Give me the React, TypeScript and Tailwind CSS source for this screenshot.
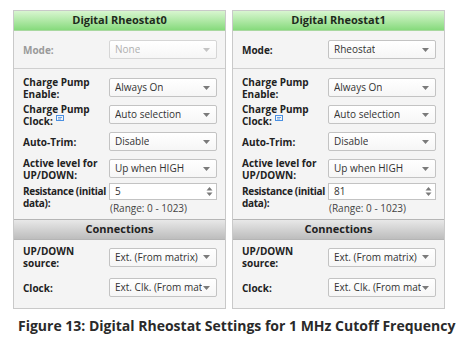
import React from 'react';

type Row = {
    label: string[];
    value: string;
    help?: boolean;
};

const font = { fontFamily: '"Open Sans", "Noto Sans", sans-serif' };

const Arrow = ({ dim }: { dim?: boolean }) => (
    <svg width="7" height="4" viewBox="0 0 7 4" className="shrink-0">
        <path d="M0 0 L7 0 L3.5 4 Z" fill={dim ? '#c4c4c4' : '#7a7a7a'} />
    </svg>
);

const HelpIcon = () => (
    <svg width="8" height="6" viewBox="0 0 8 6" className="inline-block ml-[3px] relative -top-[4px]">
        <rect x="0.5" y="0.5" width="7" height="5" fill="none" stroke="#4a90e2" strokeWidth="1" />
        <path d="M2 2.5 H6 M2 4 H5" stroke="#4a90e2" strokeWidth="0.8" />
    </svg>
);

const Select = ({ value, dim }: { value: string; dim?: boolean }) => (
    <div
        className={`w-[108px] h-[19px] shrink-0 flex items-center justify-between pl-[5px] pr-[6px] rounded-[2px] border bg-gradient-to-b from-white to-[#f6f6f6] text-[10px] whitespace-nowrap overflow-hidden ${
            dim ? 'text-[#b0b0b0] border-[#d6d6d6]' : 'text-[#333] border-[#c3c3c3]'
        }`}
    >
        <span className="overflow-hidden">{value}</span>
        <Arrow dim={dim} />
    </div>
);

const Label = ({ lines, dim, help, tight }: { lines: string[]; dim?: boolean; help?: boolean; tight?: boolean }) => (
    <div
        className={`w-[86px] shrink-0 text-[10px] leading-[12px] font-bold ${
            dim ? 'text-[#9a9a9a]' : 'text-[#222]'
        } ${tight ? 'tracking-[-0.3px]' : ''}`}
    >
        {lines.map((l, i) => (
            <div key={i} className="whitespace-nowrap">
                {l}
                {help && i === lines.length - 1 && <HelpIcon />}
            </div>
        ))}
    </div>
);

const Panel = ({ name, mode, resistance }: { name: string; mode: string; resistance: string }) => {
    const rows: Row[] = [
        { label: ['Charge Pump', 'Enable:'], value: 'Always On' },
        { label: ['Charge Pump', 'Clock:'], value: 'Auto selection', help: true },
        { label: ['Auto-Trim:'], value: 'Disable' },
        { label: ['Active level for', 'UP/DOWN:'], value: 'Up when HIGH' },
    ];
    const dim = mode === 'None';

    return (
        <div className="w-[213px] border border-[#c9c9c9] bg-[#f4f4f4]">
            <div className="h-[20px] flex items-center justify-center border-b border-[#a9d8a0] bg-gradient-to-b from-[#d8f6d0] to-[#86da7c] text-[11px] font-bold text-[#1e2a1c]">
                {name}
            </div>

            <div className="flex items-center pl-[9px] pt-[9px] pb-[8px] border-b border-[#cfcfcf]">
                <Label lines={['Mode:']} dim={dim} />
                <div className="h-[20px] flex">
                    <Select value={mode} dim={dim} />
                </div>
            </div>

            <div className="pl-[9px] pt-[5px] pb-[5px]">
                {rows.map((r) => (
                    <div key={r.value} className="h-[27px] flex items-center">
                        <Label lines={r.label} help={r.help} />
                        <Select value={r.value} />
                    </div>
                ))}
                <div className="flex items-start">
                    <div className="pt-[3px]">
                        <Label lines={['Resistance (initial', 'data):']} tight />
                    </div>
                    <div className="pt-[1px]">
                        <div className="w-[108px] h-[17px] flex items-center justify-between pl-[5px] pr-[3px] border border-[#c3c3c3] bg-white text-[10px] text-[#333]">
                            <span>{resistance}</span>
                            <svg width="7" height="11" viewBox="0 0 7 11">
                                <path d="M0.5 4.5 L6.5 4.5 L3.5 1 Z" fill="#7a7a7a" />
                                <path d="M0.5 6.5 L6.5 6.5 L3.5 10 Z" fill="#7a7a7a" />
                            </svg>
                        </div>
                        <div className="text-[10px] leading-[12px] text-[#444] mt-[2px] pl-[1px]">(Range: 0 - 1023)</div>
                    </div>
                </div>
            </div>

            <div className="h-[21px] flex items-center justify-center border-y border-[#b5b5b5] bg-gradient-to-b from-[#e8e8e8] to-[#bdbdbd] text-[11px] font-bold text-[#222]">
                Connections
            </div>

            <div className="pl-[9px] pt-[3px] pb-[4px]">
                <div className="h-[28px] flex items-center">
                    <Label lines={['UP/DOWN', 'source:']} />
                    <Select value="Ext. (From matrix)" />
                </div>
                <div className="h-[33px] flex items-center">
                    <Label lines={['Clock:']} />
                    <Select value="Ext. Clk. (From mat" />
                </div>
            </div>
        </div>
    );
};

export default function App() {
    return (
        <div className="w-[460px] h-[338px] bg-white overflow-hidden" style={font}>
            <div className="flex gap-[6px] pl-[13px] pt-[10px]">
                <Panel name="Digital Rheostat0" mode="None" resistance="5" />
                <Panel name="Digital Rheostat1" mode="Rheostat" resistance="81" />
            </div>
            <div className="mt-[6px] pl-[18px] text-[14px] font-bold text-[#2a2a2a] whitespace-nowrap">
                Figure 13: Digital Rheostat Settings for 1 MHz Cutoff Frequency
            </div>
        </div>
    );
}
